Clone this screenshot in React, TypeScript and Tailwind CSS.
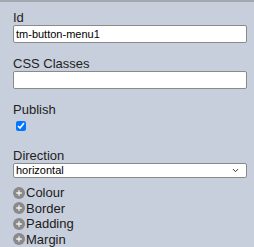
import { ChevronDown } from 'lucide-react'

function Field({ label, children }: { label: string; children: React.ReactNode }) {
  return (
    <div className="mb-[13px]">
      <div className="h-[15px] text-[13px] leading-[15px] text-[#222]">{label}</div>
      {children}
    </div>
  )
}

function PlusRow({ label }: { label: string }) {
  return (
    <div className="flex h-[15.5px] items-center text-[13px] leading-[15.5px] text-[#1a1a1a]">
      <span className="mr-px flex h-[12px] w-[12px] items-center justify-center rounded-full bg-[#8a8a8a]">
        <svg width="8" height="8" viewBox="0 0 8 8">
          <path d="M4 1.2v5.6M1.2 4h5.6" stroke="#f2f2f2" strokeWidth="1.3" />
        </svg>
      </span>
      {label}
    </div>
  )
}

export default function App() {
  return (
    <div
      className="flex h-[247px] w-[254px] flex-col overflow-hidden border-t-2 border-[#a3a8b0] bg-[#c8cfdc]"
      style={{ fontFamily: '"Liberation Sans", Arial, sans-serif' }}
    >
      <div className="flex-1 pl-[13px] pr-[7px] pt-[8px]">
        <Field label="Id">
          <input
            defaultValue="tm-button-menu1"
            className="block h-[18px] w-full rounded-[2px] border border-[#8a8a8a] bg-white px-[2px] text-[11px] text-black outline-none"
          />
        </Field>
        <Field label="CSS Classes">
          <input className="block h-[18px] w-full rounded-[2px] border border-[#8a8a8a] bg-white px-[2px] text-[11px] outline-none" />
        </Field>
        <Field label="Publish">
          <div className="flex h-[18px] items-center">
            <input type="checkbox" defaultChecked className="ml-[3px] h-[10px] w-[10px] accent-[#0075ff]" />
          </div>
        </Field>
        <div className="mb-[6px]">
          <div className="h-[15px] text-[13px] leading-[15px] text-[#222]">Direction</div>
          <div className="flex h-[15px] items-center justify-between rounded-[2px] border border-[#8a8a8a] bg-white pl-[2px] pr-[6px] text-[11px] text-black">
            <span>horizontal</span>
            <ChevronDown className="h-[9px] w-[9px] text-[#222]" strokeWidth={2.5} />
          </div>
        </div>
        <div className="pt-px">
          <PlusRow label="Colour" />
          <PlusRow label="Border" />
          <PlusRow label="Padding" />
          <PlusRow label="Margin" />
        </div>
      </div>
      <div className="flex h-px">
        <div className="w-[38px] bg-[#1c2a24]" />
        <div className="flex-1 bg-[#9a9ea6]" />
      </div>
    </div>
  )
}
